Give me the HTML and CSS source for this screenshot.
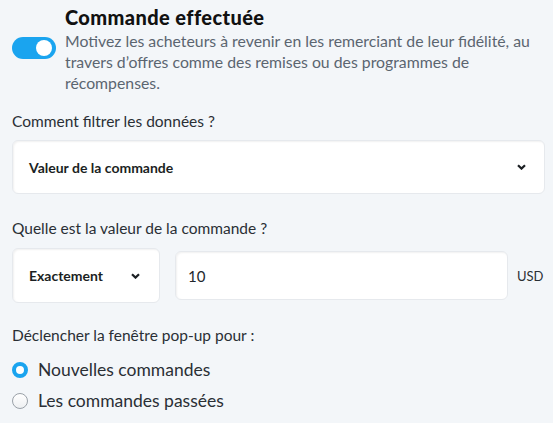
FILE: index.html
```html
<!DOCTYPE html>
<html lang="fr">
<head>
<meta charset="utf-8">
<title>Commande effectuée</title>
<link rel="stylesheet" href="styles.css">
</head>
<body>
<div class="trigger">
    <div class="trigger-head">
        <span class="toggle on"><span class="knob"></span></span>
        <div class="trigger-text">
            <div class="trigger-title">Commande effectuée</div>
            <div class="trigger-desc">Motivez les acheteurs à revenir en les remerciant de leur fidélité, au travers d’offres comme des remises ou des programmes de récompenses.</div>
        </div>
    </div>

    <div class="field filter">
        <div class="field-label">Comment filtrer les données ?</div>
        <div class="select wide">
            <span>Valeur de la commande</span>
            <svg class="chev" width="9" height="6" viewBox="0 0 9 6"><path d="M1 1.2l3.5 3.4 3.5-3.4" fill="none" stroke="#1b1f23" stroke-width="2.2"/></svg>
        </div>
    </div>

    <div class="field amount">
        <div class="field-label">Quelle est la valeur de la commande ?</div>
        <div class="value-row">
            <div class="select small">
                <span>Exactement</span>
                <svg class="chev" width="9" height="6" viewBox="0 0 9 6"><path d="M1 1.2l3.5 3.4 3.5-3.4" fill="none" stroke="#1b1f23" stroke-width="2.2"/></svg>
            </div>
            <div class="input">10</div>
            <span class="unit">USD</span>
        </div>
    </div>

    <div class="field target">
        <div class="field-label">Déclencher la fenêtre pop-up pour :</div>
        <label class="radio first"><span class="dot checked"></span>Nouvelles commandes</label>
        <label class="radio"><span class="dot"></span>Les commandes passées</label>
    </div>
</div>
</body>
</html>
```

FILE: styles.css
```css
html{background:#f3f6f9;}
body{margin:0; padding:0 8px 0 12px; font-family:"Lato", "Liberation Sans", sans-serif; color:#22272d; font-size:15px;}

.trigger-head{display:flex; align-items:flex-start; padding-top:5px;}
.toggle{flex:none; width:44px; height:22px; border-radius:11px; background:#1aa4ef; margin-top:32px; position:relative;}
.toggle .knob{position:absolute; top:3px; right:4px; width:16px; height:16px; border-radius:50%; background:#fff;}
.trigger-text{margin-left:9px; width:480px;}
.trigger-title{font-size:20px; font-weight:900; letter-spacing:0.4px; line-height:24px; color:#111;}
.trigger-desc{font-size:15.8px; line-height:21px; color:#5b6570; margin-top:1px;}

.field-label{font-size:15.5px; line-height:20px; color:#2a2f35;}
.filter{margin-top:18px;}
.amount{margin-top:24px;}
.target{margin-top:22px;}

.select, .input{background:#fff; border-radius:6px; border:1px solid #e6e9ed; box-shadow:inset 1px 1px 2px rgba(0,0,0,0.06); box-sizing:border-box; display:flex; align-items:center;}
.select span{font-weight:700; font-size:14px; color:#1b1f23;}
.select .chev{margin-left:auto;}
.wide{margin-top:9px; width:533px; height:54px; padding:0 18px 0 16px;}

.value-row{display:flex; align-items:center; margin-top:10px;}
.small{width:148px; height:55px; padding:0 19px 0 16px;}
.input{margin-left:15px; width:333px; height:49px; padding:0 12px; font-size:15px; color:#22272d;}
.unit{margin-left:9px; font-size:13px; color:#2a2f35;}

.radio{display:flex; align-items:center; font-size:17.5px; color:#2a2f35; height:31px;}
.radio.first{margin-top:9px;}
.dot{width:16px; height:16px; border-radius:50%; box-sizing:border-box; border:1px solid #9aa1a8; background:linear-gradient(#fff, #eef0f2); margin-right:10px;}
.dot.checked{border:4px solid #1aa4ef; background:#fff;}
```
